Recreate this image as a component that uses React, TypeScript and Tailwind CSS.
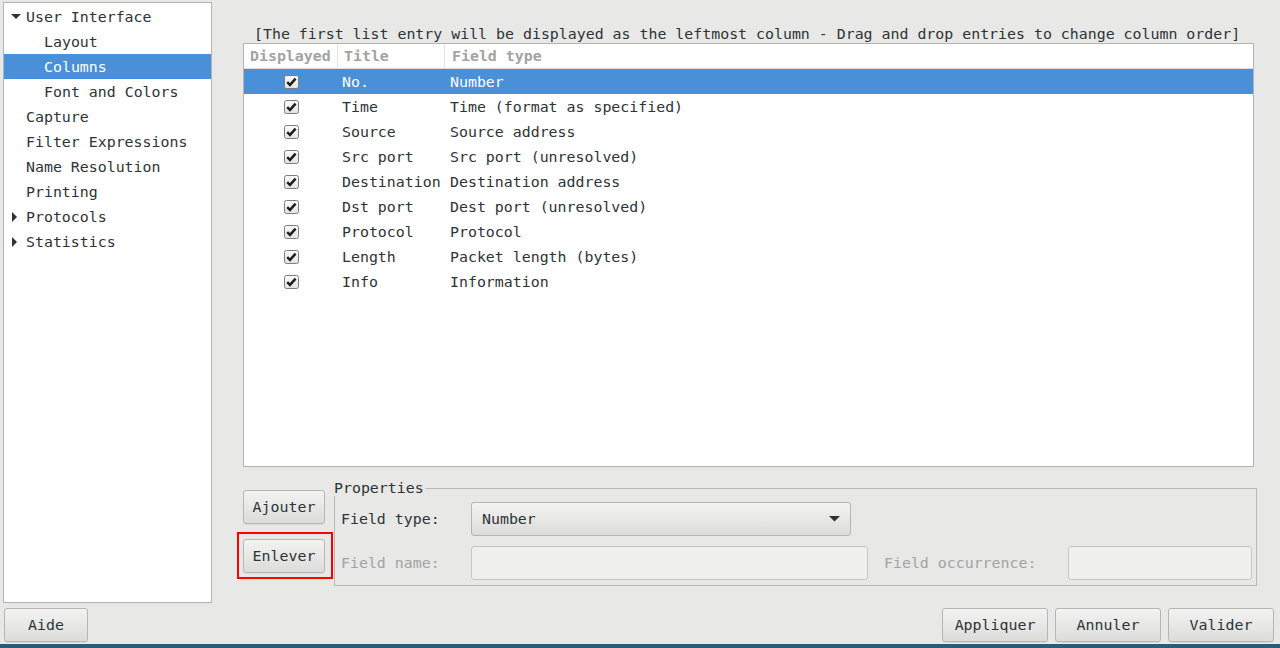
import React from 'react';

type Column = { title: string; type: string };

const columns: Column[] = [
  { title: 'No.', type: 'Number' },
  { title: 'Time', type: 'Time (format as specified)' },
  { title: 'Source', type: 'Source address' },
  { title: 'Src port', type: 'Src port (unresolved)' },
  { title: 'Destination', type: 'Destination address' },
  { title: 'Dst port', type: 'Dest port (unresolved)' },
  { title: 'Protocol', type: 'Protocol' },
  { title: 'Length', type: 'Packet length (bytes)' },
  { title: 'Info', type: 'Information' },
];

type TreeItem = { label: string; depth: number; arrow?: 'down' | 'right'; selected?: boolean };

const tree: TreeItem[] = [
  { label: 'User Interface', depth: 0, arrow: 'down' },
  { label: 'Layout', depth: 1 },
  { label: 'Columns', depth: 1, selected: true },
  { label: 'Font and Colors', depth: 1 },
  { label: 'Capture', depth: 0 },
  { label: 'Filter Expressions', depth: 0 },
  { label: 'Name Resolution', depth: 0 },
  { label: 'Printing', depth: 0 },
  { label: 'Protocols', depth: 0, arrow: 'right' },
  { label: 'Statistics', depth: 0, arrow: 'right' },
];

function Button({ label, className = '' }: { label: string; className?: string }) {
  return (
    <button
      className={`h-[34px] pt-px rounded-[3px] border border-[#b5b5b5] bg-gradient-to-b from-[#f3f3f2] to-[#dcdcdb] text-[#2e3436] shadow-[0_1px_0_rgba(0,0,0,0.06)] ${className}`}
    >
      {label}
    </button>
  );
}

function Check() {
  return (
    <svg width="15" height="14" viewBox="0 0 15 14" className="block">
      <defs>
        <linearGradient id="cb" x1="0" y1="0" x2="0" y2="1">
          <stop offset="0" stopColor="#fbfbfb" />
          <stop offset="1" stopColor="#e2e2e2" />
        </linearGradient>
      </defs>
      <rect x="0.5" y="0.5" width="14" height="13" rx="2" fill="url(#cb)" stroke="#7d7d7d" />
      <path d="M3.2 7.2 L6 9.9 L11.6 3.6" fill="none" stroke="#1c1c1c" strokeWidth="2.4" />
    </svg>
  );
}

export default function App() {
  return (
    <div className="w-[1280px] h-[648px] bg-[#e8e8e7] flex flex-col overflow-hidden text-[14.9px] text-[#2e3436] font-['DejaVu_Sans_Mono',monospace]">
      <div className="flex pt-[2px] pl-[3px]">
        {/* Preference tree */}
        <div className="w-[209px] h-[601px] bg-white border border-[#b3b3b3] pt-px">
          {tree.map((item) => (
            <div
              key={item.label}
              className={`h-[25px] pt-px flex items-center ${item.selected ? 'bg-[#4a90d9] text-white' : ''}`}
            >
              <div className="w-[22px] flex justify-center pl-[2px]">
                {item.arrow === 'down' && (
                  <svg width="10" height="6" viewBox="0 0 10 6">
                    <path d="M0 0 L10 0 L5 5 Z" fill="#2e3436" />
                  </svg>
                )}
                {item.arrow === 'right' && (
                  <svg width="6" height="10" viewBox="0 0 6 10" className="ml-[-2px]">
                    <path d="M0 0 L5 5 L0 10 Z" fill="#2e3436" />
                  </svg>
                )}
              </div>
              <span className={`whitespace-pre ${item.depth === 1 ? 'pl-[18px]' : ''}`}>{item.label}</span>
            </div>
          ))}
        </div>

        {/* Columns page */}
        <div className="ml-[31px] w-[1014px] flex flex-col pt-[20px]">
          <div className="h-[21px] leading-[24px] pl-[11px] whitespace-pre">
            [The first list entry will be displayed as the leftmost column - Drag and drop entries to change column order]
          </div>

          <div className="w-[1011px] h-[424px] bg-white border border-[#b3b3b3]">
            <div className="h-[25px] flex items-center border-b border-[#dadada] font-bold text-[#a3a3a3]">
              <div className="w-[94px] h-full flex items-center pt-px pl-[6px] border-r border-[#e3e3e3]">Displayed</div>
              <div className="w-[107px] h-full flex items-center pt-px pl-[6px] border-r border-[#e3e3e3]">Title</div>
              <div className="flex-1 h-full flex items-center pt-px pl-[7px]">Field type</div>
            </div>
            {columns.map((c, i) => (
              <div
                key={c.title}
                className={`h-[25px] flex items-center whitespace-pre ${i === 0 ? 'bg-[#4a90d9] text-white' : ''}`}
              >
                <div className="w-[94px] flex justify-center">
                  <Check />
                </div>
                <div className="w-[107px] pl-[4px] pt-px">{c.title}</div>
                <div className="flex-1 pl-[5px] pt-px">{c.type}</div>
              </div>
            ))}
          </div>

          <div className="flex items-start">
            <div className="w-[82px] flex flex-col pt-[23px]">
              <Button label="Ajouter" className="w-[82px]" />
              <div className="relative mt-[15px]">
                <Button label="Enlever" className="w-[82px]" />
                <div className="absolute left-[-6px] right-[-8px] top-[-7px] bottom-[-6px] border-2 border-[#ff0000] pointer-events-none" />
              </div>
            </div>

            <fieldset className="ml-[9px] mt-[14px] w-[924px] border border-[#b8b8b8] pb-[5px]">
              <legend className="ml-[-1px] leading-[15px] pr-[2px]">Properties</legend>
              <div className="pt-[6px] pl-[6px] flex flex-col gap-[10px]">
                <div className="flex items-center h-[34px]">
                  <span className="w-[130px] pt-px">Field type:</span>
                  <div className="w-[380px] h-[34px] rounded-[3px] border border-[#b5b5b5] bg-gradient-to-b from-[#f3f3f2] to-[#dcdcdb] flex items-center justify-between pl-[10px] pr-[10px]">
                    <span className="pt-px">Number</span>
                    <svg width="11" height="6" viewBox="0 0 11 6">
                      <path d="M0 0 L11 0 L5.5 5.5 Z" fill="#2e3436" />
                    </svg>
                  </div>
                </div>
                <div className="flex items-center h-[34px] text-[#a3a3a3]">
                  <span className="w-[130px] pt-px">Field name:</span>
                  <div className="w-[397px] h-[34px] rounded-[3px] border border-[#c6c6c6] bg-[#efefee]" />
                  <span className="ml-[16px] w-[184px] pt-px">Field occurrence:</span>
                  <div className="w-[184px] h-[34px] rounded-[3px] border border-[#c6c6c6] bg-[#efefee]" />
                </div>
              </div>
            </fieldset>
          </div>
        </div>
      </div>

      {/* Dialog buttons */}
      <div className="flex items-center mt-[5px] pl-[4px] pr-[6px]">
        <Button label="Aide" className="w-[84px]" />
        <div className="flex-1" />
        <div className="flex gap-[7px]">
          <Button label="Appliquer" className="w-[106px]" />
          <Button label="Annuler" className="w-[106px]" />
          <Button label="Valider" className="w-[106px]" />
        </div>
      </div>
      <div className="mt-auto h-[4px] bg-[#2d5b73]" />
    </div>
  );
}
